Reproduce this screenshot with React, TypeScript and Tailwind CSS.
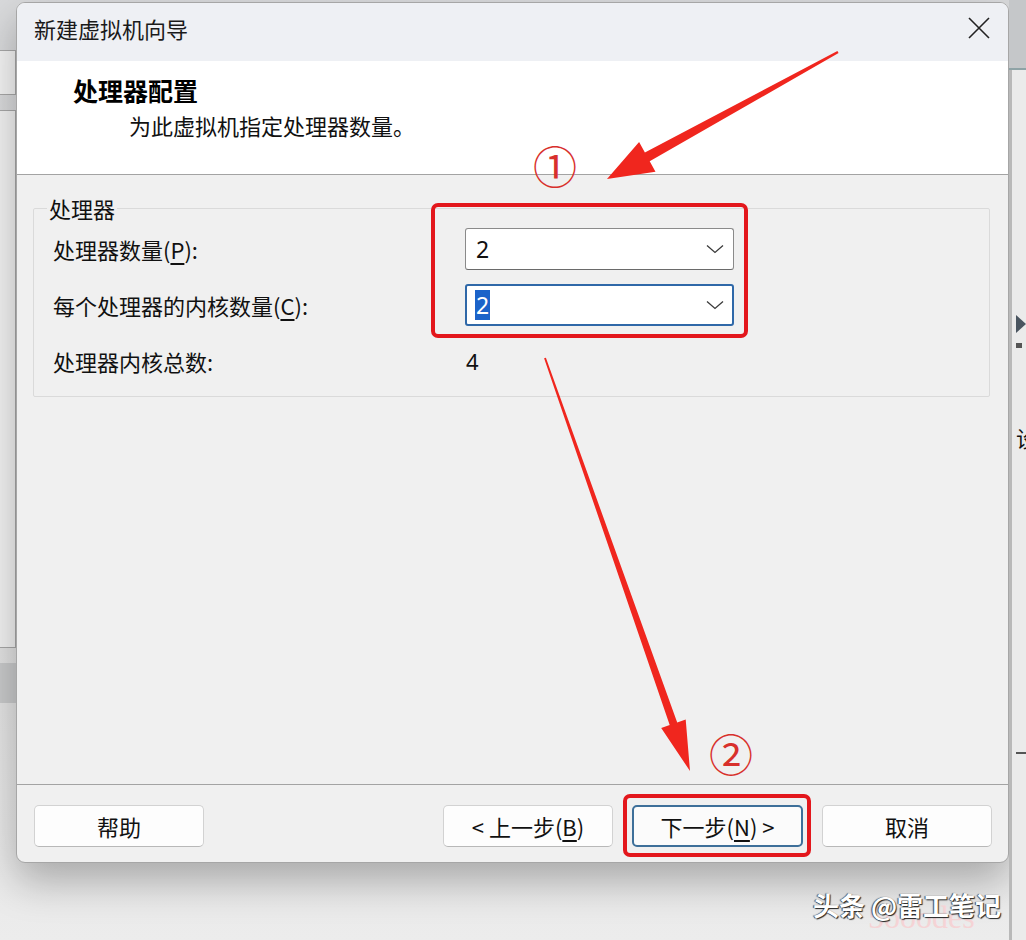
import React from 'react';

const cjk = { fontFamily: '"Noto Sans CJK SC", "Noto Sans", sans-serif' };

type Pt = [number, number];

// tapering arrow polygon from tail to tip
const arrowPoints = (tail: Pt, tip: Pt, headLen: number, headHalf: number, neckHalf: number, tailHalf: number) => {
    const dx = tail[0] - tip[0];
    const dy = tail[1] - tip[1];
    const len = Math.hypot(dx, dy);
    const ux = dx / len;
    const uy = dy / len;
    const nx = -uy;
    const ny = ux;
    const bx = tip[0] + ux * headLen;
    const by = tip[1] + uy * headLen;
    const pts: Pt[] = [
        tip,
        [bx + nx * headHalf, by + ny * headHalf],
        [bx + nx * neckHalf, by + ny * neckHalf],
        [tail[0] + nx * tailHalf, tail[1] + ny * tailHalf],
        [tail[0] - nx * tailHalf, tail[1] - ny * tailHalf],
        [bx - nx * neckHalf, by - ny * neckHalf],
        [bx - nx * headHalf, by - ny * headHalf],
    ];
    return pts.map(p => `${p[0].toFixed(1)},${p[1].toFixed(1)}`).join(' ');
};

const Chevron = () => (
    <svg width="18" height="10" viewBox="0 0 18 10" className="shrink-0">
        <path d="M1 1.5 L9 8.5 L17 1.5" fill="none" stroke="#3a3a3a" strokeWidth="1.3" />
    </svg>
);

const Combo = ({ focused }: { focused?: boolean }) => (
    <div
        className={
            focused
                ? 'flex items-center justify-between w-[269px] h-[42px] bg-white border-2 border-[#2f68a8] rounded-[3px] pl-[8px] pr-[8px]'
                : 'flex items-center justify-between w-[269px] h-[42px] bg-white border border-[#8a8a8a] border-b-[#6a6a6a] rounded-[3px] pl-[9px] pr-[9px]'
        }
    >
        {focused ? (
            <span className="text-[23px] leading-[30px] px-[1px] bg-[#1c63c9] text-white" style={{ fontFamily: '"Noto Sans", sans-serif' }}>
                2
            </span>
        ) : (
            <span className="text-[23px] leading-[30px] px-[1px] text-[#111]" style={{ fontFamily: '"Noto Sans", sans-serif' }}>
                2
            </span>
        )}
        <Chevron />
    </div>
);

const Btn = ({ label, primary }: { label: React.ReactNode; primary?: boolean }) => (
    <div
        className={
            primary
                ? 'flex items-center justify-center w-[171px] h-[42px] bg-[#fbfbfb] border-2 border-[#3d6f99] rounded-[5px] text-[22px] text-[#111]'
                : 'flex items-center justify-center w-[170px] h-[42px] bg-[#fdfdfd] border border-[#d2d2d2] border-b-[#b8b8b8] rounded-[5px] text-[22px] text-[#111]'
        }
        style={cjk}
    >
        {label}
    </div>
);

const App = () => {
    return (
        <div className="relative w-[1026px] h-[940px] overflow-hidden bg-gradient-to-b from-[#d9dadc] via-[#dcdcdc] to-[#ececec]" style={cjk}>
            <div className="flex h-full">
                {/* 左侧窗口残影 */}
                <div className="w-[16px] shrink-0 flex flex-col pt-[50px] gap-[15px]">
                    <div className="h-[45px] bg-[#f4f4f4] border border-[#a8a8a8] border-l-0" />
                    <div className="h-[538px] bg-[#f2f2f2] border border-[#a8a8a8] border-l-0" />
                    <div className="h-[40px] bg-[#c9cacb]" />
                </div>

                {/* 对话框 */}
                <div className="w-[993px] h-[861px] mt-[2px] shrink-0 flex flex-col bg-[#f0f0f0] border border-[#a6a6a6] rounded-[9px] overflow-hidden shadow-[0_18px_40px_rgba(0,0,0,0.28)]">
                    {/* 标题栏 */}
                    <div className="h-[58px] shrink-0 flex items-center justify-between bg-[#eef0f4] pl-[17px] pr-[18px] pb-[8px]">
                        <span className="text-[22px] text-[#1a1a1a]">新建虚拟机向导</span>
                        <svg width="22" height="22" viewBox="0 0 22 22">
                            <path d="M1 1 L21 21 M21 1 L1 21" stroke="#222" strokeWidth="1.6" />
                        </svg>
                    </div>

                    {/* 页头 */}
                    <div className="h-[114px] shrink-0 bg-white border-b border-[#a3a3a3] pl-[56px] pt-[12px]">
                        <div className="text-[25px] font-bold leading-[34px] text-black">处理器配置</div>
                        <div className="text-[22px] leading-[32px] text-[#111] pl-[56px] mt-[2px]">为此虚拟机指定处理器数量。</div>
                    </div>

                    {/* 内容 */}
                    <div className="flex-1 flex flex-col">
                        <fieldset className="mt-[19px] ml-[16px] mr-[18px] border border-[#dadada] rounded-[2px] pl-[19px] pr-[19px] pt-[6px] pb-[14px]">
                            <legend className="text-[22px] leading-[28px] text-[#111] ml-[-6px] px-[2px]">处理器</legend>
                            <div className="flex flex-col gap-[14px]">
                                <div className="flex items-center h-[42px]">
                                    <div className="w-[412px] text-[22px] text-[#111]">
                                        处理器数量(<span className="underline underline-offset-4">P</span>):
                                    </div>
                                    <Combo />
                                </div>
                                <div className="flex items-center h-[42px]">
                                    <div className="w-[412px] text-[22px] text-[#111]">
                                        每个处理器的内核数量(<span className="underline underline-offset-4">C</span>):
                                    </div>
                                    <Combo focused />
                                </div>
                                <div className="flex items-center h-[42px]">
                                    <div className="w-[412px] text-[22px] text-[#111]">处理器内核总数:</div>
                                    <span className="text-[22px] text-[#111] pl-[1px]" style={{ fontFamily: '"Noto Sans", sans-serif' }}>
                                        4
                                    </span>
                                </div>
                            </div>
                        </fieldset>
                    </div>

                    {/* 按钮栏 */}
                    <div className="h-[78px] shrink-0 border-t border-[#a3a3a3] flex items-start pt-[20px] pl-[17px] pr-[16px]">
                        <Btn label="帮助" />
                        <div className="flex-1" />
                        <div className="flex gap-[19px]">
                            <Btn label={<>&lt; 上一步(<span className="underline underline-offset-4">B</span>)</>} />
                            <Btn primary label={<>下一步(<span className="underline underline-offset-4">N</span>) &gt;</>} />
                            <Btn label="取消" />
                        </div>
                    </div>
                </div>

                {/* 右侧窗口残影 */}
                <div className="flex-1 min-w-0 flex flex-col">
                    <div className="h-[70px] bg-[#c5c7c9] border-b-2 border-[#8fa3a6]" />
                    <div className="flex-1 bg-[#ebebeb] border-l-[3px] border-[#b9b9b9] pt-[245px] pl-[4px] overflow-hidden">
                        <svg width="10" height="18" viewBox="0 0 10 18">
                            <path d="M0 0 L10 9 L0 18 Z" fill="#4a5560" />
                        </svg>
                        <div className="mt-[10px] w-[6px] h-[5px] bg-[#555]" />
                        <div className="mt-[74px] text-[22px] leading-[30px] text-[#111] whitespace-nowrap">设</div>
                        <div className="mt-[300px] h-[2px] bg-[#555]" />
                    </div>
                </div>
            </div>

            {/* 标注层 */}
            <div className="absolute inset-0 pointer-events-none">
                <svg width="1026" height="940" viewBox="0 0 1026 940">
                    <rect x="433" y="205" width="313" height="131" rx="5" fill="none" stroke="#e3171c" strokeWidth="4" />
                    <rect x="625" y="796" width="184" height="59" rx="5" fill="none" stroke="#e3171c" strokeWidth="4" />
                    <polygon points={arrowPoints([838, 52], [607, 179], 46, 17, 5, 1.2)} fill="#f0261e" />
                    <polygon points={arrowPoints([545, 358], [690, 771], 50, 13, 4, 1)} fill="#f0261e" />
                    <text x="533" y="184" fontSize="44" fill="#d8302c" style={cjk}>①</text>
                    <text x="709" y="772" fontSize="44" fill="#d8302c" style={cjk}>②</text>
                    <text x="868" y="928" fontSize="32" fill="#f5d3d5" fontFamily="Liberation Serif, serif">5ooodes</text>
                </svg>
                <div
                    className="absolute left-[813px] top-[885px] text-[26px] font-bold text-white whitespace-nowrap [text-shadow:1px_1px_1px_#222,-1px_0_1px_#444]"
                    style={cjk}
                >
                    头条 @雷工笔记
                </div>
            </div>
        </div>
    );
};

export default App;
